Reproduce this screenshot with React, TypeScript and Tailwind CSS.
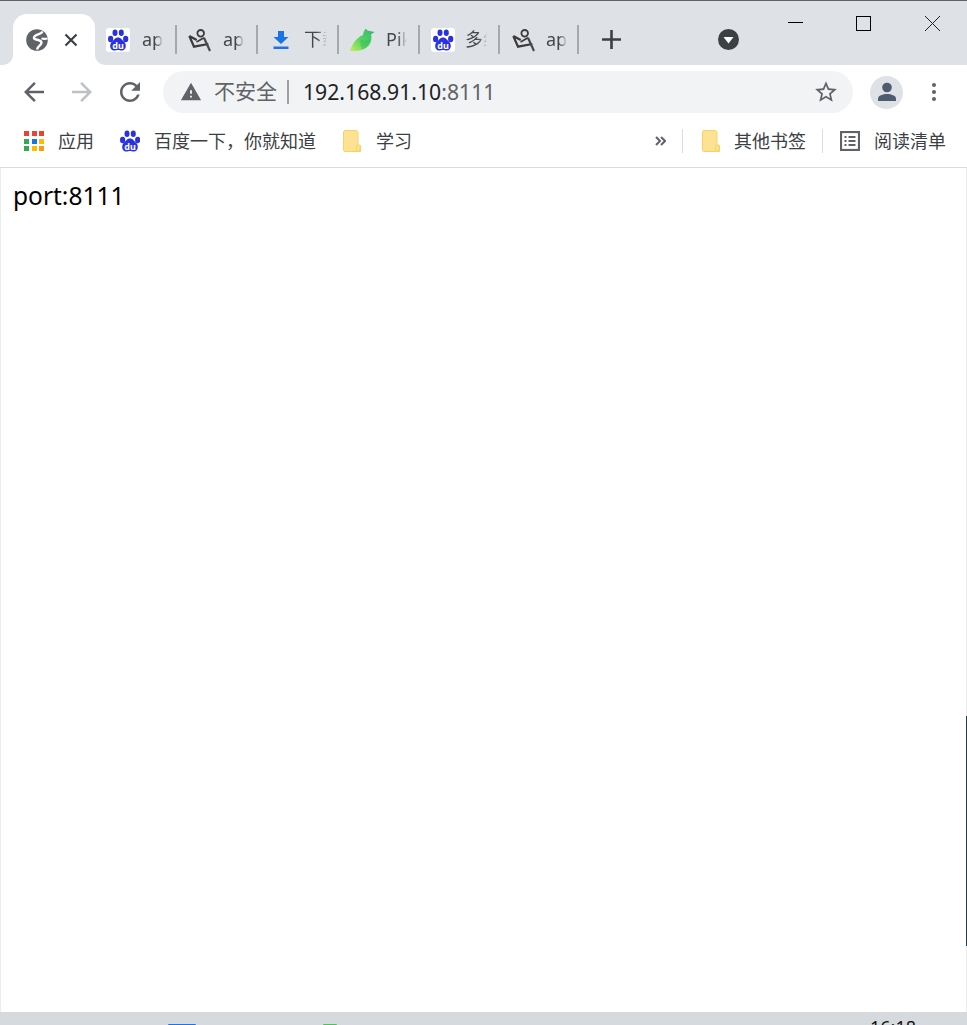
import React from 'react';

const FONT = '"Noto Sans", "Noto Sans CJK SC", sans-serif';

const BaiduIcon: React.FC<{ boxed?: boolean }> = ({ boxed }) => (
  <svg width={boxed ? 24 : 20} height={boxed ? 24 : 22} viewBox={boxed ? '0 0 24 24' : '2 1 20 22'} className="shrink-0">
    {boxed && <rect width="24" height="24" rx="3" fill="#fff" />}
    <g fill="#2932e1">
      <ellipse cx="4.600" cy="11" rx="2.600" ry="3.200" />
      <ellipse cx="9" cy="4.800" rx="2.500" ry="3.200" />
      <ellipse cx="15.300" cy="4.800" rx="2.500" ry="3.200" />
      <ellipse cx="19.700" cy="11" rx="2.600" ry="3.200" />
      <path d="M12 9.500c3 0 3.800 2.400 5.800 4 3.200 2.600 2.600 8.700-1.800 9-1.600.1-2.600-.6-4-.6s-2.400.7-4 .6c-4.400-.3-5-6.400-1.800-9 2-1.600 2.800-4 5.800-4z" />
    </g>
    <text x="12" y="20.800" textAnchor="middle" fontSize="9" fontWeight="700" fill="#fff" fontFamily={FONT}>du</text>
  </svg>
);

const FigureIcon = () => (
  <svg width="24" height="24" viewBox="0 0 24 24" fill="none" stroke="#3b3b3b" className="shrink-0">
    <circle cx="12.700" cy="5.300" r="3.300" strokeWidth="1.800" />
    <path d="M1.300 8l7.400 4M1.300 8L6 18.700l14.300-2.700" strokeWidth="2.200" />
    <path d="M16 9.700L22 23" strokeWidth="2.200" stroke="#4a4a4a" />
    <path d="M8.500 14l7.500-4.300" strokeWidth="1.600" />
  </svg>
);

const DownloadIcon = () => (
  <svg width="16" height="20" viewBox="0 0 16 20" fill="#1a73e8" className="shrink-0">
    <path d="M5 1h6v6h4.500L8 14 .5 7H5z" />
    <rect x="0.500" y="16.500" width="15" height="2.500" />
  </svg>
);

const BirdIcon = () => (
  <svg width="25" height="24" viewBox="0 0 25 24" className="shrink-0">
    <defs>
      <linearGradient id="bird" x1="0" y1="1" x2="1" y2="0">
        <stop offset="0" stopColor="#c2ee5c" />
        <stop offset="0.450" stopColor="#5ad65f" />
        <stop offset="1" stopColor="#27b573" />
      </linearGradient>
    </defs>
    <path d="M0 23C2.500 15 7 9.500 13 7c.5-2.800 1.200-5 3-6.500.3 1.200 1.200 2 2.500 2.300l6 1.200-3.500 2.500c1.300 5.500-.5 10.500-5 13.500-4.800 2.800-10.500 3.200-16 3z" fill="url(#bird)" />
    <path d="M10.500 11.500c-.8 4 0 7 2 10 4.500-1.800 7.500-6 7-10.500-2.800 1.800-6 2-9 .5z" fill="#27ae60" opacity="0.350" />
  </svg>
);

const GlobeIcon = () => (
  <svg width="22" height="22" viewBox="0 0 22 22" className="shrink-0">
    <circle cx="11" cy="11" r="10.800" fill="#5f6368" />
    <path
      d="M16.500 2.500C15 6 9 5 8 8.500c-.8 3 7 1.500 7.500 5 .3 2.500-3.500 3-4.500 7"
      stroke="#fff"
      strokeWidth="2.400"
      fill="none"
    />
    <path d="M15.500 9.500c2 .5 4 .5 6 0" stroke="#fff" strokeWidth="2" fill="none" />
  </svg>
);

const FolderIcon = () => (
  <svg width="18" height="22" viewBox="0 0 18 22" className="shrink-0">
    <path d="M2 .5h11c1 0 2 1 2 2v13h2.500v6H2c-.8 0-1.500-.7-1.500-1.500v-18C.5 1.200 1.200.5 2 .5z" fill="#fde293" stroke="#fad165" />
    <rect x="13.500" y="15" width="3.500" height="6" rx="1" fill="#fde293" stroke="#fad165" />
  </svg>
);

const Separator = () => <div className="h-[29px] w-[2px] shrink-0 bg-[#a5a8ac]" />;

const TabStrip = () => (
  <div className="flex h-[65px] shrink-0 border-t border-[#5f6368] bg-[#dee1e6]">
    <div className="mt-[13px] flex h-[51px] items-center pl-[13px]">
      {/* active tab */}
      <div className="relative flex h-full w-[82px] shrink-0 items-center rounded-t-[14px] bg-white pl-[13px]">
        <span className="absolute bottom-0 left-[-10px] h-[10px] w-[10px] bg-white">
          <span className="block h-full w-full rounded-br-[10px] bg-[#dee1e6]" />
        </span>
        <span className="absolute bottom-0 right-[-10px] h-[10px] w-[10px] bg-white">
          <span className="block h-full w-full rounded-bl-[10px] bg-[#dee1e6]" />
        </span>
        <GlobeIcon />
        <svg width="14" height="14" viewBox="0 0 14 14" stroke="#3c4043" strokeWidth="2.200" className="ml-[16px]">
          <path d="M1.500 1.500l11 11M12.500 1.500l-11 11" />
        </svg>
      </div>

      <div className="flex h-full items-center pl-[11px]">
        <div className="flex w-[69px] items-center">
          <BaiduIcon boxed />
          <span className="ml-[12px] w-[21px] overflow-hidden whitespace-nowrap text-[18px] text-[#45484c] [mask-image:linear-gradient(to_right,black_65%,transparent)]">
            api
          </span>
        </div>
        <Separator />
      </div>
      <div className="flex h-full items-center pl-[11px]">
        <div className="flex w-[68px] items-center">
          <FigureIcon />
          <span className="ml-[11px] w-[21px] overflow-hidden whitespace-nowrap text-[18px] text-[#45484c] [mask-image:linear-gradient(to_right,black_65%,transparent)]">
            api
          </span>
        </div>
        <Separator />
      </div>
      <div className="flex h-full items-center pl-[15px]">
        <div className="flex w-[64px] items-center">
          <DownloadIcon />
          <span className="ml-[15px] w-[23px] overflow-hidden whitespace-nowrap text-[18px] text-[#45484c] [mask-image:linear-gradient(to_right,black_55%,transparent)]">
            下载
          </span>
        </div>
        <Separator />
      </div>
      <div className="flex h-full items-center pl-[11px]">
        <div className="flex w-[68px] items-center">
          <BirdIcon />
          <span className="ml-[11px] w-[21px] overflow-hidden whitespace-nowrap text-[18px] text-[#45484c] [mask-image:linear-gradient(to_right,black_55%,transparent)]">
            PikPak
          </span>
        </div>
        <Separator />
      </div>
      <div className="flex h-full items-center pl-[11px]">
        <div className="flex w-[67px] items-center">
          <BaiduIcon boxed />
          <span className="ml-[10px] w-[22px] overflow-hidden whitespace-nowrap text-[18px] text-[#45484c] [mask-image:linear-gradient(to_right,black_60%,transparent)]">
            多线程
          </span>
        </div>
        <Separator />
      </div>
      <div className="flex h-full items-center pl-[12px]">
        <div className="flex w-[65px] items-center">
          <FigureIcon />
          <span className="ml-[10px] w-[21px] overflow-hidden whitespace-nowrap text-[18px] text-[#45484c] [mask-image:linear-gradient(to_right,black_65%,transparent)]">
            api
          </span>
        </div>
        <Separator />
      </div>

      <svg width="19" height="19" viewBox="0 0 19 19" fill="#3c4043" className="ml-[23px] shrink-0">
        <path d="M8.200 0h2.600v8.200H19v2.600h-8.200V19H8.200v-8.200H0V8.200h8.200z" />
      </svg>
      <svg width="21" height="21" viewBox="0 0 21 21" className="ml-[97px] shrink-0">
        <circle cx="10.500" cy="10.500" r="10.500" fill="#3c4043" />
        <path d="M5.500 8h10l-5 6.500z" fill="#fff" />
      </svg>
    </div>

    {/* window controls */}
    <div className="ml-auto mr-[27px] mt-[15px] flex h-[15px] items-center">
      <svg width="15" height="15" viewBox="0 0 15 15" stroke="#000" fill="none">
        <path d="M0 6.500h15" />
      </svg>
      <svg width="15" height="15" viewBox="0 0 15 15" stroke="#000" fill="none" className="ml-[53px]">
        <rect x="0.500" y="0.500" width="14" height="14" />
      </svg>
      <svg width="15" height="15" viewBox="0 0 15 15" stroke="#222" fill="none" className="ml-[54px]">
        <path d="M0 0l15 15M15 0L0 15" />
      </svg>
    </div>
  </div>
);

const Toolbar = () => (
  <div className="flex h-[54px] shrink-0 items-center gap-[18px] bg-white pl-[19px]">
    <svg width="30" height="30" viewBox="0 0 24 24" fill="#5f6368" className="shrink-0">
      <path d="M20 11H7.830l5.590-5.590L12 4l-8 8 8 8 1.410-1.410L7.830 13H20v-2z" />
    </svg>
    <svg width="30" height="30" viewBox="0 0 24 24" fill="#bdc1c6" className="shrink-0">
      <path d="M4 11h12.170l-5.590-5.590L12 4l8 8-8 8-1.410-1.410L16.170 13H4v-2z" />
    </svg>
    <svg width="30" height="30" viewBox="0 0 24 24" fill="#5f6368" className="shrink-0">
      <path d="M17.650 6.350C16.200 4.900 14.210 4 12 4c-4.420 0-7.990 3.580-7.990 8s3.570 8 7.990 8c3.730 0 6.840-2.550 7.730-6h-2.080c-.82 2.330-3.040 4-5.650 4-3.310 0-6-2.690-6-6s2.690-6 6-6c1.660 0 3.140.69 4.220 1.780L13 11h7V4l-2.350 2.350z" />
    </svg>

    <div className="flex h-[42px] w-[690px] shrink-0 items-center rounded-full bg-[#f1f3f4] pl-[17px] pr-[14px]">
      <svg width="22" height="22" viewBox="0 0 24 24" fill="#5f6368" className="shrink-0">
        <path d="M1 21h22L12 2 1 21zm12-3h-2v-2h2v2zm0-4h-2v-4h2v4z" />
      </svg>
      <span className="ml-[12px] text-[21px] text-[#5f6368]">不安全</span>
      <span className="ml-[10px] h-[24px] w-[2px] bg-[#9aa0a6]" />
      <span className="ml-[14px] text-[21.200px] text-[#202124]">
        192.168.91.10<span className="text-[#5f6368]">:8111</span>
      </span>
      <svg width="26" height="26" viewBox="0 0 24 24" fill="#5f6368" className="ml-auto shrink-0">
        <path d="M22 9.240l-7.190-.62L12 2 9.190 8.630 2 9.240l5.460 4.730L5.820 21 12 17.270 18.180 21l-1.630-7.030L22 9.240zM12 15.400l-3.760 2.270 1-4.280-3.320-2.880 4.380-.38L12 6.100l1.710 4.040 4.380.38-3.320 2.880 1 4.280L12 15.400z" />
      </svg>
    </div>

    <div className="-ml-px flex h-[33px] w-[33px] shrink-0 items-center justify-center rounded-full bg-[#dee1e6]">
      <svg width="20" height="20" viewBox="0 0 20 20" fill="#4f5b70">
        <circle cx="10" cy="5.500" r="4.800" />
        <path d="M1 19v-2.500C1 13.500 6 12 10 12s9 1.500 9 4.500V19z" />
      </svg>
    </div>
    <div className="ml-[11px] flex flex-col gap-[3px]">
      <span className="h-[4px] w-[4px] rounded-full bg-[#5f6368]" />
      <span className="h-[4px] w-[4px] rounded-full bg-[#5f6368]" />
      <span className="h-[4px] w-[4px] rounded-full bg-[#5f6368]" />
    </div>
  </div>
);

const APP_COLORS = ['#ea4335', '#ea4335', '#ea4335', '#34a853', '#1a73e8', '#fbbc04', '#34a853', '#fbbc04', '#fa9a0c'];

const BookmarksBar = () => (
  <div className="flex h-[49px] shrink-0 items-center border-b border-[#dadce0] bg-white pb-[4px] pl-[24px] pr-[21px] text-[18px] text-[#3c4043]">
    <div className="grid h-[20px] w-[20px] shrink-0 grid-cols-3 gap-[2.500px]">
      {APP_COLORS.map((c, i) => (
        <span key={i} style={{ backgroundColor: c }} />
      ))}
    </div>
    <span className="ml-[14px]">应用</span>
    <div className="ml-[26px]">
      <BaiduIcon />
    </div>
    <span className="ml-[14px]">百度一下，你就知道</span>
    <div className="ml-[27px]">
      <FolderIcon />
    </div>
    <span className="ml-[15px]">学习</span>

    <div className="ml-auto flex items-center">
      <svg width="11" height="10" viewBox="0 0 11 10" fill="none" stroke="#5f6368" strokeWidth="2">
        <path d="M1 1l4 4-4 4M6 1l4 4-4 4" />
      </svg>
      <span className="ml-[16px] h-[24px] w-px bg-[#dadce0]" />
      <div className="ml-[19px]">
        <FolderIcon />
      </div>
      <span className="ml-[14px]">其他书签</span>
      <span className="ml-[16px] h-[24px] w-px bg-[#dadce0]" />
      <svg width="20" height="20" viewBox="0 0 20 20" fill="none" className="ml-[17px] shrink-0">
        <rect x="1" y="1" width="18" height="18" stroke="#5f6368" strokeWidth="2.200" />
        <path d="M4.500 6h2M8.500 6h7M4.500 10h2M8.500 10h7M4.500 14h2M8.500 14h7" stroke="#5f6368" strokeWidth="2" />
      </svg>
      <span className="ml-[14px]">阅读清单</span>
    </div>
  </div>
);

const Taskbar = () => (
  <div className="flex h-[13px] shrink-0 overflow-hidden bg-[#d6dadf]">
    <span className="ml-[168px] mt-[12px] h-[1px] w-[28px] rounded-t bg-[#1a73e8]" />
    <span className="ml-[127px] mt-[12px] h-[1px] w-[14px] rounded-t bg-[#4cc355]" />
    <span className="ml-[533px] mt-[6px] text-[18px] leading-[18px] text-[#111]">16:18</span>
  </div>
);

export default function App() {
  return (
    <div className="flex h-[1025px] w-full flex-col overflow-hidden bg-white" style={{ fontFamily: FONT }}>
      <TabStrip />
      <Toolbar />
      <BookmarksBar />
      <main className="relative flex-1 border-x border-[#ececec] pl-[12px] pt-[12px]">
        <p className="text-[24.500px] leading-[32px] text-black">port:8111</p>
        {/* dark edge of the window behind */}
        <span className="absolute right-[-1px] top-[548px] h-[230px] w-px bg-[#2b3a42]" />
      </main>
      <Taskbar />
    </div>
  );
}
